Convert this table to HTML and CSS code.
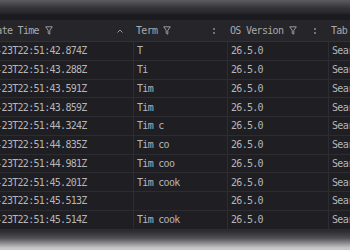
FILE: index.html
```html
<!DOCTYPE html>
<html>
<head>
<meta charset="utf-8">
<link rel="stylesheet" href="styles.css">
</head>
<body>
<div class="topband"></div>
<div class="grid">
  <div class="hcell hfirst"><span class="label">Date Time</span><svg class="filter" viewBox="0 0 8 9"><path d="M0.7 0.8H7.3L4.8 4.3V8.2L3.2 7.3V4.3Z" fill="none" stroke="currentColor" stroke-width="1"/></svg><span class="spacer"></span><svg class="caret" viewBox="0 0 6 4"><path d="M0.5 3.5L3 1L5.5 3.5" fill="none" stroke="currentColor" stroke-width="1"/></svg></div>
  <div class="hcell"><span class="label">Term</span><svg class="filter" viewBox="0 0 8 9"><path d="M0.7 0.8H7.3L4.8 4.3V8.2L3.2 7.3V4.3Z" fill="none" stroke="currentColor" stroke-width="1"/></svg><span class="spacer"></span><svg class="dots" viewBox="0 0 2 6"><circle cx="1" cy="1" r="0.9" fill="currentColor"/><circle cx="1" cy="5" r="0.9" fill="currentColor"/></svg></div>
  <div class="hcell"><span class="label">OS Version</span><svg class="filter" viewBox="0 0 8 9"><path d="M0.7 0.8H7.3L4.8 4.3V8.2L3.2 7.3V4.3Z" fill="none" stroke="currentColor" stroke-width="1"/></svg><span class="spacer"></span><svg class="dots" viewBox="0 0 2 6"><circle cx="1" cy="1" r="0.9" fill="currentColor"/><circle cx="1" cy="5" r="0.9" fill="currentColor"/></svg></div>
  <div class="hcell"><span class="label">Tab</span></div>

  <div class="cell">2025-06-23T22:51:42.874Z</div><div class="cell sep">T</div><div class="cell sep">26.5.0</div><div class="cell sep">Search</div>
  <div class="cell">2025-06-23T22:51:43.288Z</div><div class="cell sep">Ti</div><div class="cell sep">26.5.0</div><div class="cell sep">Search</div>
  <div class="cell">2025-06-23T22:51:43.591Z</div><div class="cell sep">Tim</div><div class="cell sep">26.5.0</div><div class="cell sep">Search</div>
  <div class="cell">2025-06-23T22:51:43.859Z</div><div class="cell sep">Tim</div><div class="cell sep">26.5.0</div><div class="cell sep">Search</div>
  <div class="cell">2025-06-23T22:51:44.324Z</div><div class="cell sep">Tim c</div><div class="cell sep">26.5.0</div><div class="cell sep">Search</div>
  <div class="cell">2025-06-23T22:51:44.835Z</div><div class="cell sep">Tim co</div><div class="cell sep">26.5.0</div><div class="cell sep">Search</div>
  <div class="cell">2025-06-23T22:51:44.981Z</div><div class="cell sep">Tim coo</div><div class="cell sep">26.5.0</div><div class="cell sep">Search</div>
  <div class="cell">2025-06-23T22:51:45.201Z</div><div class="cell sep">Tim cook</div><div class="cell sep">26.5.0</div><div class="cell sep">Search</div>
  <div class="cell">2025-06-23T22:51:45.513Z</div><div class="cell sep"></div><div class="cell sep">26.5.0</div><div class="cell sep">Search</div>
  <div class="cell">2025-06-23T22:51:45.514Z</div><div class="cell sep">Tim cook</div><div class="cell sep">26.5.0</div><div class="cell sep">Search</div>
</div>
<div class="bottomblur"></div>
</body>
</html>
```
FILE: styles.css
```css
html, body {
  margin: 0;
  padding: 0;
  width: 350px;
  height: 250px;
  overflow: hidden;
  background: #1f1e22;
  font-family: "DejaVu Sans Mono", "Liberation Mono", monospace;
  font-size: 10px;
  letter-spacing: -0.7px;
  color: #b6b6ba;
}
.topband {
  height: 20px;
  background: linear-gradient(to bottom, #5c5b5f 0px, #49484c 4px, #343337 8px, #2b2a2e 12px, #1b1a1e 15px, #1b1a1e 20px);
}
.grid {
  display: grid;
  grid-template-columns: 178px 94px 101px 120px;
  grid-template-rows: 22px repeat(10, 18.75px);
  margin-left: -45px;
  width: 493px;
}
.hcell {
  background: #262529;
  border-bottom: 1px solid #323135;
  box-sizing: border-box;
  display: flex;
  align-items: center;
  padding: 0 12px 0 3px;
  color: #a9a9ad;
  white-space: nowrap;
  overflow: hidden;
}
.hfirst {
  padding-left: 36px;
  padding-right: 10px;
}
.label {
  display: block;
}
.spacer {
  flex: 1;
}
.filter {
  width: 8px;
  height: 9px;
  margin-left: 6px;
  color: #9a9a9e;
}
.caret {
  width: 6px;
  height: 4px;
  color: #9a9a9e;
}
.dots {
  width: 2px;
  height: 6px;
  color: #9a9a9e;
}
.cell {
  box-sizing: border-box;
  border-bottom: 1px solid #2d2c30;
  padding: 0 4px;
  display: flex;
  align-items: center;
  white-space: nowrap;
  overflow: hidden;
}
.sep {
  border-left: 1px solid #2d2c30;
  padding-left: 3px;
}
.bottomblur {
  height: 30px;
  background: linear-gradient(to bottom, #29282c 0px, #3a393d 4px, #505054 8px, #8a8a8e 13px, #c6c6c8 18px, #cfcfd0 30px);
}
```
